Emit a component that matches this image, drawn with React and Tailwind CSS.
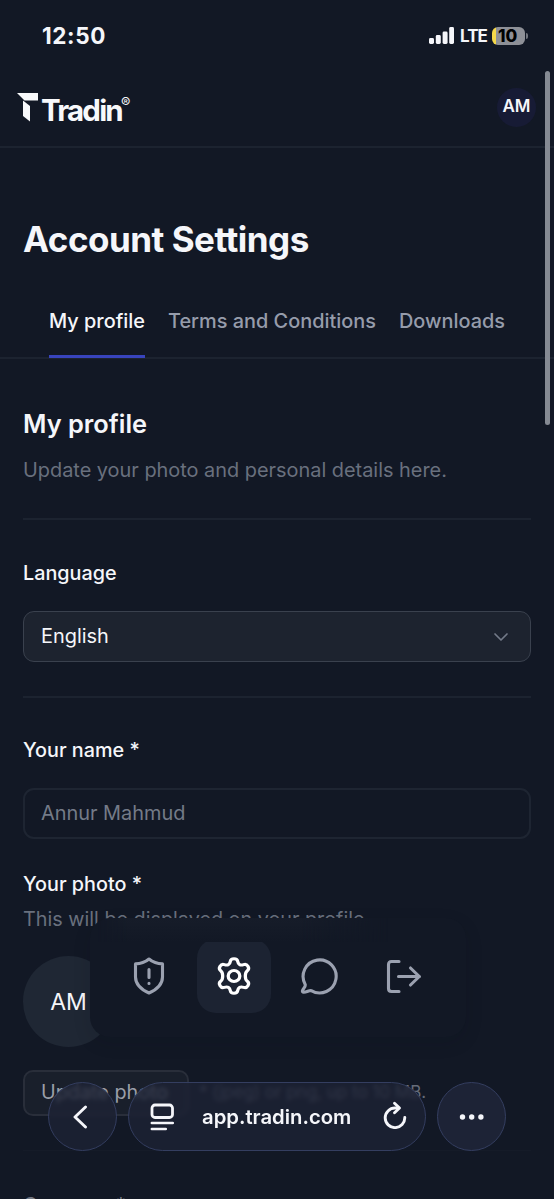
const tabs = ["My profile", "Terms and Conditions", "Downloads"];

function StatusBar() {
  return (
    <div className="flex h-[71px] items-center justify-between pl-[42px] pr-[26px]">
      <span className="mt-px text-[22.5px] font-bold leading-none tracking-[0.6px]">12:50</span>
      <div className="flex items-center">
        <svg width="25" height="17" viewBox="0 0 25 17" fill="currentColor">
          <rect x="0" y="11" width="5" height="6" rx="1.4" />
          <rect x="6.8" y="8" width="5" height="9" rx="1.4" />
          <rect x="13.6" y="4.5" width="5" height="12.5" rx="1.4" />
          <rect x="20.2" y="0" width="4.8" height="17" rx="1.4" />
        </svg>
        <span className="ml-[6px] w-[27px] whitespace-nowrap text-[17px] font-bold leading-5 tracking-[-0.9px]">LTE</span>
        <div className="ml-[5px] flex h-[18px] w-[33px] items-center rounded-[6px] bg-[linear-gradient(to_right,#f5d84a_4px,#8e9097_4px)] pl-[6px]">
          <span className="text-[17px] font-extrabold leading-[18px] text-black">10</span>
        </div>
        <span className="ml-px h-[6px] w-[2px] rounded-r-full bg-[#72757e]" />
      </div>
    </div>
  );
}

function Header() {
  return (
    <header className="flex h-[77px] items-center justify-between border-b-2 border-[#1c2330] pb-[3px] pl-[17px] pr-[18px]">
      <div className="flex items-start text-[#f8f9fb]">
        <svg className="mt-[2px]" width="22" height="29" viewBox="0 0 22 29" fill="currentColor">
          <path d="M0 0h21v7.5H7.5z" />
          <path d="M6 7.5 13 13v15.5L6 23z" />
        </svg>
        <span className="ml-[2px] mt-[5px] w-[80px] whitespace-nowrap text-[29.5px] font-bold leading-[28px] tracking-[-1.8px]">Tradin</span>
        <span className="mt-[4px] text-[14px] leading-[16px]">®</span>
      </div>
      <div className="flex size-[39px] items-center justify-center rounded-full bg-[#171b35] text-[17px] font-semibold">AM</div>
    </header>
  );
}

function FloatingNav() {
  return (
    <nav className="absolute left-[90px] top-[918px] flex h-[119px] w-[376px] items-center justify-center gap-[11px] rounded-[20px] bg-[#121825] pb-[3px] pr-[4px] shadow-[0_6px_18px_rgba(10,14,24,0.12)]">
      <div className="absolute left-2 top-0 h-6 w-[290px] bg-gradient-to-b from-[#161c29] to-[#121825] [mask-image:linear-gradient(to_right,transparent,black_10%,black_70%,transparent)]" />
      <div className="flex size-[74px] items-center justify-center text-[#9ba1b0]">
        <svg width="34" height="38" viewBox="0 0 34 38" fill="none" stroke="currentColor" strokeWidth="3.1" strokeLinecap="round" strokeLinejoin="round">
          <path d="M17 2c3.8 3.2 8.4 4.8 13.5 4.9V20c0 8-5.5 12.4-13.5 16C9 32.4 3.5 28 3.5 20V6.900C8.600 6.800 13.200 5.200 17 2Z" />
          <path d="M17 12.500v8M17 26.400v.1" />
        </svg>
      </div>
      <div className="flex size-[74px] items-center justify-center rounded-[19px] bg-[#1c2332] text-white">
        <svg width="38" height="38" viewBox="0 0 36 38" preserveAspectRatio="none" fill="none" stroke="currentColor" strokeWidth="3.1" strokeLinecap="round" strokeLinejoin="round">
          <path d="M14.500 4.400C15 .8 21 .8 21.500 4.400c.5 3.200 2.600 4.400 5.600 3.200 3.400-1.400 6.400 3.800 3.500 6.100-2.500 2-2.500 8.600 0 10.600 2.900 2.300-.1 7.500-3.500 6.100-3-1.200-5.100 0-5.600 3.200-.5 3.600-6.500 3.600-7 0-.5-3.200-2.600-4.400-5.600-3.200-3.400 1.400-6.400-3.800-3.500-6.100 2.500-2 2.500-8.600 0-10.600C2.500 11.400 5.500 6.200 8.900 7.600c3 1.200 5.100 0 5.600-3.200Z" />
          <circle cx="18" cy="19" r="5.500" />
        </svg>
      </div>
      <div className="flex size-[74px] items-center justify-center text-[#9ba1b0]">
        <svg width="38" height="38" viewBox="0 0 38 38" fill="none" stroke="currentColor" strokeWidth="3.1" strokeLinecap="round" strokeLinejoin="round">
          <path d="M5.200 27.400A16.500 16.500 0 1 1 11.200 33.600C9.800 32.900 6.800 35.100 3.700 35.300c-.9.100-1.500-.7-1.200-1.600 1-2.500 3.400-4.200 2.700-6.300Z" />
        </svg>
      </div>
      <div className="flex size-[74px] items-center justify-center text-[#9ba1b0]">
        <svg className="ml-px mt-px" width="36" height="36" viewBox="0 0 36 36" fill="none" stroke="currentColor" strokeWidth="3.1" strokeLinecap="round" strokeLinejoin="round">
          <path d="M13 2.500H5.500Q2.500 2.500 2.500 5.500v24q0 3 3 3H13" />
          <path d="M12.500 17.500h21M24.500 9 33.300 17.500 24.500 26" />
        </svg>
      </div>
    </nav>
  );
}

function BrowserBar() {
  return (
    <div className="absolute left-12 top-[1082px] flex h-[69px] items-center gap-[11px]">
      <button className="flex size-[69px] items-center justify-center rounded-full border border-[#343e60] bg-[#1d2336]/75 backdrop-blur-[2px]">
        <svg className="mr-[5px]" width="16" height="24" viewBox="0 0 16 24" fill="none" stroke="currentColor" strokeWidth="2.900" strokeLinecap="round" strokeLinejoin="round">
          <path d="M13.500 2 3 12l10.500 10" />
        </svg>
      </button>
      <div className="flex h-[69px] w-[298px] items-center rounded-full border border-[#343e60] bg-[#1d2336]/75 pl-[21px] pr-[18px] backdrop-blur-[2px]">
        <svg width="24" height="28" viewBox="0 0 24 28" fill="none" stroke="currentColor" strokeWidth="2.800" strokeLinecap="round">
          <rect x="2" y="2" width="20.500" height="12.500" rx="3" />
          <path d="M1.800 20h21M1.800 26h14" strokeWidth="2.500" />
        </svg>
        <span className="ml-[28px] mt-px flex-1 whitespace-nowrap text-[20.3px] font-semibold leading-6">app.tradin.com</span>
        <svg className="-mt-[3px]" width="24" height="28" viewBox="0 0 24 28" fill="none" stroke="currentColor" strokeWidth="2.900" strokeLinecap="round" strokeLinejoin="round">
          <path d="M15 7H12A9.800 9.800 0 1 0 21.800 16.500" />
          <path d="m11.500 2.300 5 4.700-5 4.800" />
        </svg>
      </div>
      <button className="flex size-[69px] items-center justify-center rounded-full border border-[#343e60] bg-[#1d2336]">
        <svg width="26" height="6" viewBox="0 0 26 6" fill="currentColor">
          <circle cx="3.500" cy="3" r="2.700" />
          <circle cx="12.700" cy="3" r="2.700" />
          <circle cx="21.900" cy="3" r="2.700" />
        </svg>
      </button>
    </div>
  );
}

export default function App() {
  return (
    <div className="relative h-[1199px] w-[554px] overflow-hidden bg-[#121825] font-['Inter',sans-serif] text-[#f5f6fa]">
      <StatusBar />
      <Header />

      <main>
        <h1 className="mt-[67px] pl-[23px] text-[35px] font-bold leading-[48px] tracking-[-0.5px]">Account Settings</h1>

        <div className="mt-[35px] flex h-[61px] gap-[23px] border-b-2 border-[#1c2330] pl-[49px]">
          {tabs.map((tab, i) => (
            <button
              key={tab}
              className={
                i === 0
                  ? "-mb-px flex whitespace-nowrap border-b-[3px] border-[#3844bd] pt-[8px] text-[19.9px] font-medium leading-[30px]"
                  : "flex whitespace-nowrap pt-[8px] text-[19.9px] font-medium leading-[30px] text-[#969cab]"
              }
            >
              {tab}
            </button>
          ))}
        </div>

        <section className="px-[23px]">
          <h2 className="mt-[47px] text-[25.4px] font-semibold leading-[36px]">My profile</h2>
          <p className="mt-[13px] text-[19.9px] leading-[30px] text-[#69707e]">Update your photo and personal details here.</p>

          <div className="mt-[33px] border-t-2 border-[#1c2330] pt-[38px]">
            <label className="block text-[19.8px] font-medium leading-[30px]">Language</label>
            <div className="mt-[23px] flex h-[51px] items-center justify-between rounded-[11px] border-[1.5px] border-[#3a414e] bg-[#1d232f] pl-[17px] pr-[21px] pt-px text-[19.9px]">
              English
              <svg width="16" height="10" viewBox="0 0 16 10" fill="none" stroke="#737a88" strokeWidth="1.700" strokeLinecap="round" strokeLinejoin="round">
                <path d="m2 2 6 6 6-6" />
              </svg>
            </div>
          </div>

          <div className="mt-[34px] border-t-2 border-[#1c2330] pt-[37px]">
            <label className="block text-[19.8px] font-medium leading-[30px]">Your name *</label>
            <div className="mt-[23px] flex h-[51px] items-center rounded-[11px] border-2 border-[#1e2532] pl-4 pt-px text-[19.9px] text-[#747b88]">Annur Mahmud</div>
          </div>

          <label className="mt-[30px] block text-[19.8px] font-medium leading-[30px]">Your photo *</label>
          <p className="mt-[5px] text-[19.8px] leading-[30px] text-[#69707e]">This will be displayed on your profile.</p>
          <div className="mt-[22px] flex size-[91px] items-center justify-center rounded-full bg-[#1f2734] pt-[2px] text-[23px]">AM</div>

          <div className="mt-[23px] flex h-[46px] items-center text-[19.8px] text-[#9a9ea8]">
            <div className="flex h-full w-[166px] items-center whitespace-nowrap rounded-[10px] border-2 border-[#292e3a] bg-[#191f2b] pl-4">Update photo</div>
            <span className="ml-[10px] w-[225px] whitespace-nowrap text-right text-[17px] text-[#666c79]">* (jpeg) or png, up to 10 MB.</span>
          </div>

          <div className="mt-[34px] border-t border-[#151b28] pt-[39px] text-[19.8px] font-medium leading-[30px] text-[#747984]">Currency *</div>
        </section>
      </main>

      <FloatingNav />
      <BrowserBar />
      <div className="absolute right-1 top-[71px] h-[354px] w-[5px] rounded-full bg-[#858a93]" />
    </div>
  );
}
